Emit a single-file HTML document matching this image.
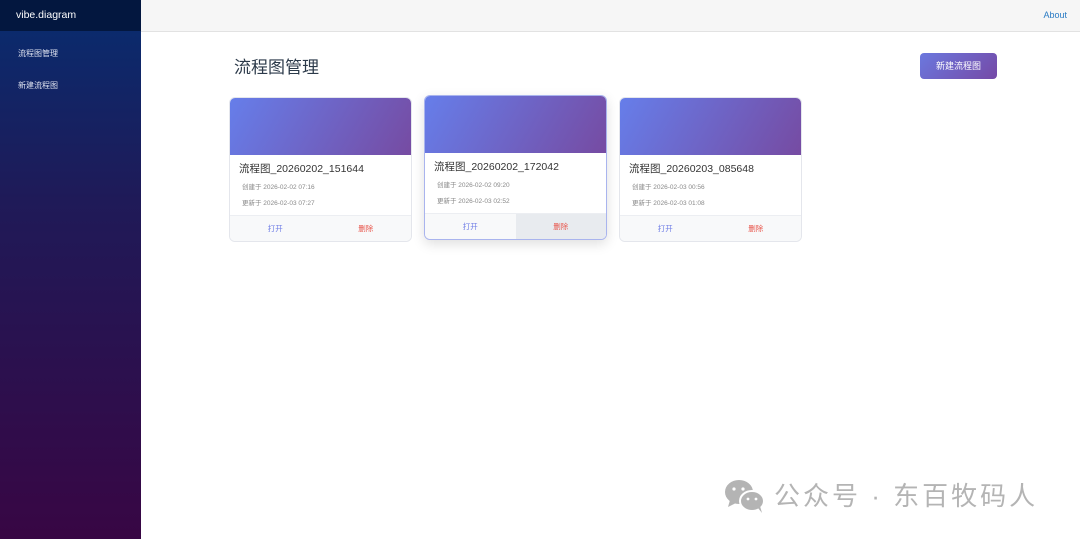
<!DOCTYPE html>
<html><head><meta charset="utf-8"><style>
*{box-sizing:border-box;margin:0;padding:0}
body{width:1080px;height:539px;overflow:hidden;font-family:"Liberation Sans","Noto Sans CJK SC",sans-serif;background:#fff;position:relative}
.side{position:absolute;left:0;top:0;width:141px;height:539px;background:linear-gradient(180deg,#0b2a6c 31px,#1f1a58 200px,#380644 539px)}
.brand{height:31px;background:#03173f;color:#fff;font-size:10.5px;line-height:31px;padding-left:16px}
.nav{color:#dfe3f0;font-size:8px;padding-left:18px;line-height:10px}
.top{position:absolute;left:141px;top:0;right:0;height:32px;background:#f6f6f6;border-bottom:1px solid #e2e2e2}
.about{position:absolute;right:13px;top:10px;font-size:9px;color:#2a7bc4}
h1{position:absolute;left:234px;top:57px;font-size:17px;line-height:22px;font-weight:normal;color:#2c3a4a}
.btn{position:absolute;left:920px;top:53px;width:77px;height:26px;border-radius:4px;background:linear-gradient(135deg,#6b78de,#7549a6);color:#fff;font-size:9px;text-align:center;line-height:26px}
.card{position:absolute;width:183px;height:145px;border:1px solid #e4e6ec;border-radius:6px;overflow:hidden;background:#fff}
.card.h{border-color:#a9b4ee;box-shadow:0 4px 12px rgba(0,0,0,.13)}
.img{height:57px;background:linear-gradient(120deg,#667eea,#764ba2)}
.t{font-size:10.5px;line-height:14px;color:#333;margin:7px 0 0 9px}
.m{font-size:6.5px;line-height:9px;color:#888;margin:7px 0 0 12px}
.m2{margin-top:7px}
.f{position:absolute;left:0;right:0;bottom:0;height:26px;background:#f8f9fa;border-top:1px solid #eceef2;display:flex;font-size:7.5px;line-height:25px;text-align:center}
.f div{flex:1}
.o{color:#6c7be6}.d{color:#e8554b}
.wm{position:absolute;left:724px;top:478px;color:#b4b4b4;font-size:26px;line-height:36px;display:flex;align-items:center;gap:8px;letter-spacing:3px}
</style></head><body>
<div class="side"><div class="brand">vibe.diagram</div>
<div class="nav" style="margin-top:18px">流程图管理</div>
<div class="nav" style="margin-top:22px">新建流程图</div></div>
<div class="top"><div class="about">About</div></div>
<h1>流程图管理</h1>
<div class="btn">新建流程图</div>
<div class="card" style="left:229px;top:97px"><div class="img"></div><div class="t">流程图_20260202_151644</div><div class="m">创建于 2026-02-02 07:16</div><div class="m m2">更新于 2026-02-03 07:27</div><div class="f"><div class="o">打开</div><div class="d">删除</div></div></div>
<div class="card h" style="left:424px;top:95px"><div class="img"></div><div class="t">流程图_20260202_172042</div><div class="m">创建于 2026-02-02 09:20</div><div class="m m2">更新于 2026-02-03 02:52</div><div class="f"><div class="o">打开</div><div class="d" style="background:#e8ebef">删除</div></div></div>
<div class="card" style="left:619px;top:97px"><div class="img"></div><div class="t">流程图_20260203_085648</div><div class="m">创建于 2026-02-03 00:56</div><div class="m m2">更新于 2026-02-03 01:08</div><div class="f"><div class="o">打开</div><div class="d">删除</div></div></div>
<div class="wm"><svg width="42" height="36" viewBox="0 0 42 36"><ellipse cx="15" cy="14" rx="14" ry="12" fill="#b4b4b4"/><path d="M6 22 L4 29 L12 25Z" fill="#b4b4b4"/><ellipse cx="28" cy="23" rx="12" ry="10" fill="#b4b4b4" stroke="#fff" stroke-width="2"/><path d="M34 30 L38 35 L36 28Z" fill="#b4b4b4"/><circle cx="10" cy="11" r="1.6" fill="#fff"/><circle cx="19" cy="11" r="1.6" fill="#fff"/><circle cx="24" cy="21" r="1.4" fill="#fff"/><circle cx="32" cy="21" r="1.4" fill="#fff"/></svg><span>公众号 · 东百牧码人</span></div>
</body></html>
